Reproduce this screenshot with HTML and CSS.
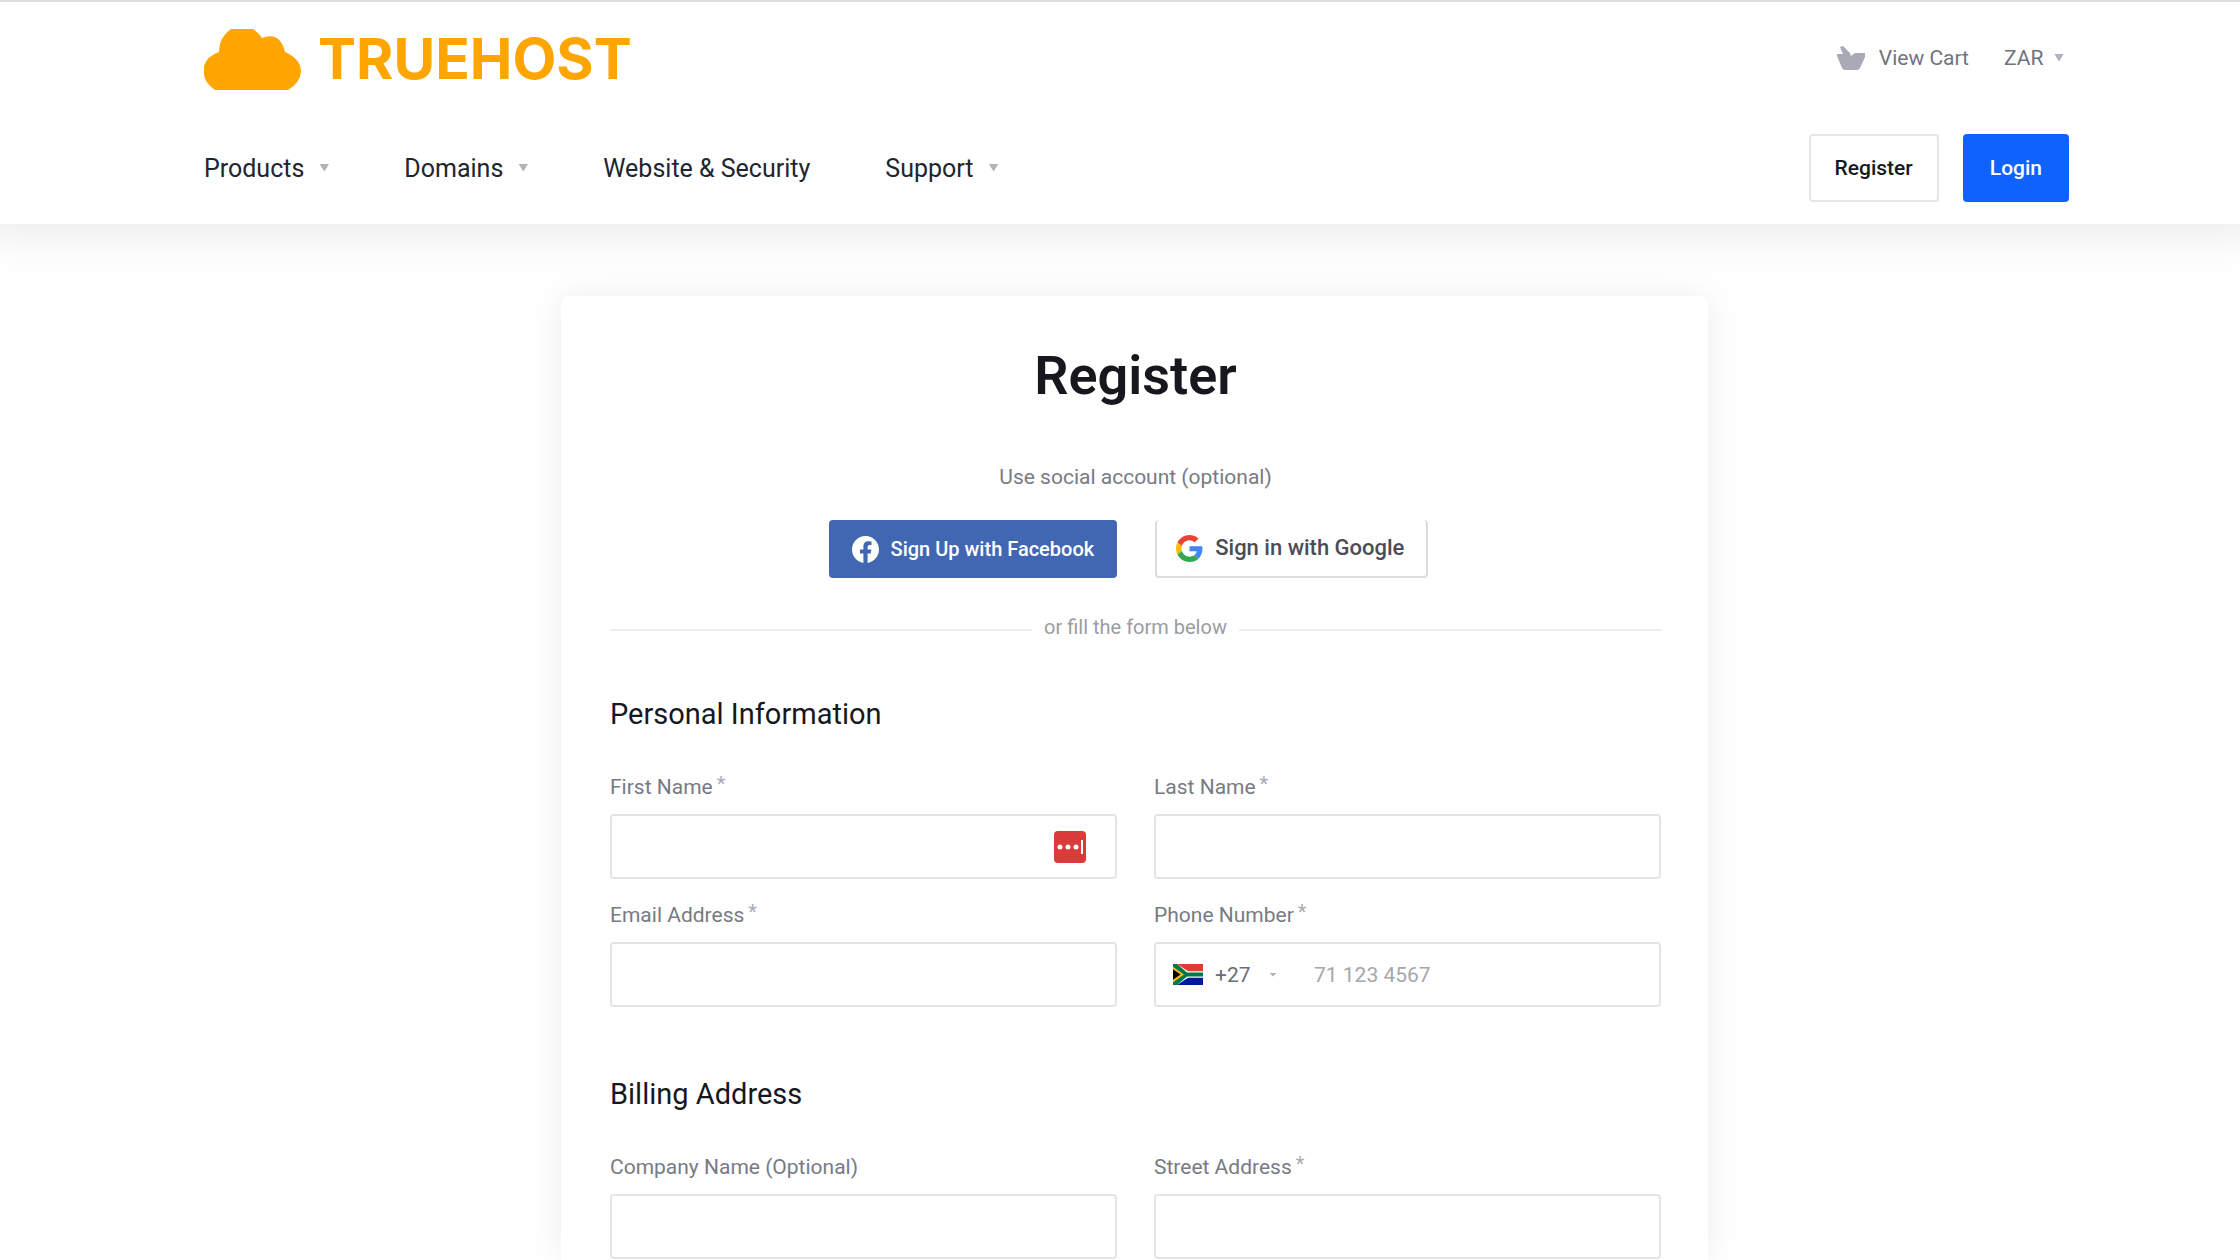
FILE: index.html
```html
<!DOCTYPE html>
<html lang="en">
<head>
<meta charset="utf-8">
<meta name="viewport" content="width=device-width, initial-scale=1">
<title>Register - Truehost</title>
<link rel="stylesheet" href="styles.css">
</head>
<body>
<header class="header">
  <div class="topbar">
    <a class="logo" href="#">
      <svg class="logo-cloud" viewBox="0 0 97 61" aria-hidden="true"><path d="M11 61Q0 53 0 45V37Q3 27 15 23Q15 8 27 0H49Q55 4 58 9Q76 2 81 23Q97 30 97 43Q96 54 84 61Z"/></svg>
      <span class="logo-text">TRUEHOST</span>
    </a>
    <div class="tools">
      <a class="cart" href="#">
        <svg class="cart-icon" viewBox="0 0 28 24" aria-hidden="true"><path d="M3 1L6 0L13 7L14 10L18 7H28V11L23 22Q22 24 20 24H8Q6 24 5 22L0 10V8H6Z"/></svg>
        View Cart
      </a>
      <div class="currency">
        <select class="currency-select" aria-label="Currency"><option>ZAR</option></select>
        <span class="caret"></span>
      </div>
    </div>
  </div>
  <div class="menubar">
    <nav class="nav">
      <button class="nav-item" type="button">Products <span class="caret"></span></button>
      <button class="nav-item" type="button">Domains <span class="caret"></span></button>
      <a class="nav-item" href="#">Website &amp; Security</a>
      <button class="nav-item" type="button">Support <span class="caret"></span></button>
    </nav>
    <div class="actions">
      <a class="btn btn-outline" href="#">Register</a>
      <a class="btn btn-primary" href="#">Login</a>
    </div>
  </div>
</header>

<main class="main">
  <form class="card">
    <h1 class="title">Register</h1>
    <p class="hint">Use social account (optional)</p>
    <div class="social">
      <button class="social-btn facebook" type="button">
        <svg class="social-icon" viewBox="0 0 24 24" aria-hidden="true"><path fill="#fff" d="M24 12.07C24 5.4 18.63 0 12 0S0 5.4 0 12.07C0 18.1 4.39 23.09 10.13 24v-8.44H7.08v-3.49h3.05V9.41c0-3.02 1.79-4.69 4.53-4.69 1.31 0 2.68.24 2.68.24v2.97h-1.51c-1.49 0-1.96.93-1.96 1.89v2.25h3.33l-.53 3.49h-2.8V24C19.61 23.09 24 18.1 24 12.07z"/></svg>
        Sign Up with Facebook
      </button>
      <button class="social-btn google" type="button">
        <svg class="social-icon" viewBox="0 0 48 48" aria-hidden="true"><path fill="#ea4335" d="M24 9.5c3.54 0 6.71 1.22 9.21 3.6l6.85-6.85C35.9 2.38 30.47 0 24 0 14.62 0 6.51 5.38 2.56 13.22l7.98 6.19C12.43 13.72 17.74 9.5 24 9.5z"/><path fill="#4285f4" d="M46.98 24.55c0-1.57-.15-3.09-.38-4.55H24v9.02h12.94c-.58 2.96-2.26 5.48-4.78 7.18l7.73 6c4.51-4.18 7.09-10.36 7.09-17.65z"/><path fill="#fbbc05" d="M10.53 28.59c-.48-1.45-.76-2.99-.76-4.59s.27-3.14.76-4.59l-7.98-6.19C.92 16.46 0 20.12 0 24c0 3.88.92 7.54 2.56 10.78l7.97-6.19z"/><path fill="#34a853" d="M24 48c6.48 0 11.93-2.13 15.89-5.81l-7.73-6c-2.15 1.45-4.92 2.3-8.16 2.3-6.26 0-11.57-4.22-13.47-9.91l-7.98 6.19C6.51 42.62 14.62 48 24 48z"/></svg>
        Sign in with Google
      </button>
    </div>
    <div class="divider">or fill the form below</div>

    <section class="section">
      <h2 class="section-title">Personal Information</h2>
      <div class="fields">
        <div class="field">
          <label class="label" for="first">First Name<span class="req">*</span></label>
          <div class="control">
            <input class="input" id="first" type="text">
            <svg class="manager" viewBox="0 0 32 32" aria-hidden="true"><rect width="32" height="32" rx="4" fill="#d93a3a"/><g fill="#fff"><circle cx="6" cy="16" r="2.5"/><circle cx="14" cy="16" r="2.5"/><circle cx="22" cy="16" r="2.5"/><rect x="27" y="9" width="2" height="14"/></g></svg>
          </div>
        </div>
        <div class="field">
          <label class="label" for="last">Last Name<span class="req">*</span></label>
          <div class="control"><input class="input" id="last" type="text"></div>
        </div>
        <div class="field">
          <label class="label" for="email">Email Address<span class="req">*</span></label>
          <div class="control"><input class="input" id="email" type="email"></div>
        </div>
        <div class="field">
          <label class="label" for="phone">Phone Number<span class="req">*</span></label>
          <div class="control">
            <svg class="flag" viewBox="0 0 30 20" preserveAspectRatio="none" aria-hidden="true"><rect width="30" height="20" fill="#fff"/><path fill="#e03c31" d="M4 0H30V7H15Z"/><path fill="#001a9c" d="M4 20H30V13H15Z"/><path fill="#007749" d="M0 0H4L14 8H30V12H14L4 20H0Z"/><path fill="#ffb81c" d="M0 2.500L11 10L0 17.500Z"/><path fill="#000" d="M0 5L7.500 10L0 15Z"/></svg>
            <select class="dial" aria-label="Country code"><option>+27</option></select>
            <span class="caret caret-small"></span>
            <input class="input phone" id="phone" type="tel" placeholder="71 123 4567">
          </div>
        </div>
      </div>
    </section>

    <section class="section">
      <h2 class="section-title">Billing Address</h2>
      <div class="fields">
        <div class="field">
          <label class="label" for="company">Company Name (Optional)</label>
          <div class="control"><input class="input" id="company" type="text"></div>
        </div>
        <div class="field">
          <label class="label" for="street">Street Address<span class="req">*</span></label>
          <div class="control"><input class="input" id="street" type="text"></div>
        </div>
      </div>
    </section>
  </form>
</main>
</body>
</html>
```
FILE: styles.css
```css
* { box-sizing: border-box; }

body {
  display: flex;
  flex-direction: column;
  min-height: 100vh;
  margin: 0;
  background: #fff;
  color: #16181d;
  font-family: Roboto, "Liberation Sans", sans-serif;
  font-size: 21px;
  line-height: 24px;
}

a { color: inherit; text-decoration: none; }

button, input, select { font: inherit; color: inherit; }

/* Header */
.header {
  padding: 0 171px 22px 204px;
  border-top: 2px solid #dcdcdc;
  background: #fff;
  box-shadow: 0 -16px 48px 24px rgba(0, 0, 0, .09);
}

.topbar, .menubar {
  display: flex;
  align-items: center;
  justify-content: space-between;
}

.topbar { height: 114px; }

.logo { display: flex; align-items: center; gap: 17px; }
.logo-cloud { width: 97px; height: 61px; fill: #ffa500; }
.logo-text {
  color: #ffa500;
  font-family: Inter, sans-serif;
  font-size: 57px;
  font-weight: 700;
  line-height: 60px;
}

.tools { display: flex; gap: 35px; padding-bottom: 3px; color: #70737d; }
.cart { display: flex; align-items: center; gap: 14px; }
.cart-icon { width: 28px; height: 24px; fill: #a8aab6; }

.currency { display: flex; align-items: center; gap: 10px; padding-right: 5px; }
.currency-select, .dial {
  padding: 0;
  border: 0;
  background: none;
  appearance: none;
}

.caret {
  width: 10px;
  height: 8px;
  background: #b0b3bc;
  clip-path: polygon(0 0, 100% 0, 50% 100%);
}
.caret-small { width: 8px; height: 4px; }

.menubar { height: 86px; padding-top: 18px; }
.nav { display: flex; gap: 75px; padding-top: 2px; font-size: 25px; color: #21252e; }
.nav-item {
  display: flex;
  align-items: center;
  gap: 15px;
  padding: 0;
  border: 0;
  background: none;
}
.nav-item .caret { margin-bottom: 3px; }

.actions { display: flex; gap: 24px; }
.btn {
  padding: 20px 25px;
  border: 2px solid #e6e6e6;
  border-radius: 4px;
  font-weight: 500;
}
.btn-outline { padding: 20px 24px; }
.btn-primary { border-color: #0f62fe; background: #0f62fe; color: #fff; }

/* Registration card */
.main {
  display: flex;
  flex: 1;
  justify-content: center;
  padding: 72px 0 0 29px;
}

.card {
  width: 1147px;
  padding: 48px 47px 0 49px;
  border-radius: 8px 8px 0 0;
  background: #fff;
  box-shadow: 0 0 36px rgba(0, 0, 0, .08);
}

.title {
  margin: 0 0 57px;
  font-size: 54px;
  font-weight: 600;
  line-height: 64px;
  text-align: center;
}

.hint { margin: 0 0 31px; color: #787a84; text-align: center; }

.social {
  display: flex;
  justify-content: center;
  gap: 38px;
  padding-right: 14px;
}
.social-btn {
  display: flex;
  align-items: center;
  height: 58px;
  border: 2px solid #dcdcdf;
  border-radius: 4px;
  font-weight: 500;
}
.social-icon { width: 27px; height: 27px; }
.facebook {
  gap: 12px;
  padding: 0 21px;
  border-color: #4267b2;
  background: #4267b2;
  color: #fff;
  font-size: 20px;
}
.google {
  gap: 12px;
  padding: 0 22px 0 19px;
  border-top: 0;
  background: #fff;
  color: #4a4d55;
  font-size: 22px;
}

.divider {
  display: flex;
  align-items: center;
  gap: 12px;
  margin: 37px 0 59px;
  color: #9a9ca3;
  font-size: 20px;
}
.divider::before, .divider::after {
  content: "";
  flex: 1;
  height: 2px;
  margin-top: 5px;
  background: #eee;
}

.section + .section { margin-top: 71px; }
.section-title {
  margin: 0 0 44px;
  font-size: 29px;
  font-weight: 400;
  line-height: 32px;
}

.fields {
  display: grid;
  grid-template-columns: 1fr 1fr;
  gap: 23px 37px;
}
.field { display: flex; flex-direction: column; gap: 14px; }
.label { display: flex; gap: 4px; height: 26px; align-items: center; color: #787a84; }
.req { align-self: start; color: #a9abb2; font-size: 20px; line-height: 20px; }

.control {
  display: flex;
  align-items: center;
  height: 65px;
  padding: 0 17px;
  border: 2px solid #e2e5e5;
  border-radius: 4px;
}
.input {
  flex: 1;
  min-width: 0;
  height: 100%;
  padding: 0;
  border: 0;
  outline: 0;
  background: none;
}
.manager { width: 32px; height: 32px; margin-right: 12px; }
.flag { width: 30px; height: 21px; margin-right: 12px; }
.dial { margin-right: 18px; color: #6a6d76; }
.phone { margin-left: 37px; }
.phone::placeholder { color: #a5a7ab; opacity: 1; }
```
